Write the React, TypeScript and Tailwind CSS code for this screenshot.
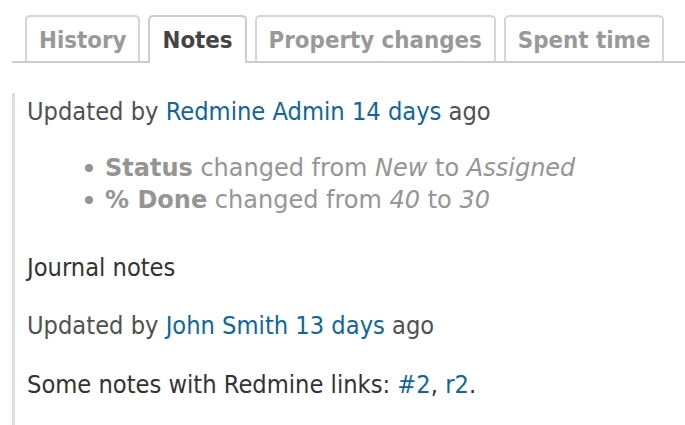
import React from "react";

const cond = { fontFamily: '"DejaVu Sans Condensed", "DejaVu Sans", Verdana, sans-serif', fontStretch: "condensed" as const };
const wide = { fontFamily: '"DejaVu Sans", Verdana, sans-serif', fontStretch: "normal" as const };

function Tab({ label, active }: { label: string; active?: boolean }) {
  return active ? (
    <div className="relative -mb-[2px] rounded-t-[5px] border-2 border-b-0 border-[#cccccc] bg-white px-[12px] pt-[10px] pb-[10px] text-[23.8px] font-bold leading-[26px] text-[#444444]">
      {label}
    </div>
  ) : (
    <div className="rounded-t-[5px] border-2 border-b-0 border-[#d5d5d5] bg-white px-[12px] pt-[10px] pb-[8px] text-[23.8px] font-bold leading-[26px] text-[#999999]">
      {label}
    </div>
  );
}

export default function App() {
  return (
    <div className="h-[425px] w-[685px] overflow-hidden bg-white" style={cond}>
      <div className="pl-[12px] pt-[15px]">
        <div className="flex items-end gap-[8px] border-b-2 border-[#cccccc] pl-[13px]">
          <Tab label="History" />
          <Tab label="Notes" active />
          <Tab label="Property changes" />
          <Tab label="Spent time" />
        </div>
      </div>
      <div className="ml-[12px] mt-[30px] border-l-[3px] border-[#dddddd] pl-[12px] pb-[40px] text-[25.2px] leading-[32px]">
        <div className="pt-[3px] text-[#505050]">
          Updated by <span className="text-[#116699]">Redmine Admin</span>{" "}
          <span className="text-[#116699]">14 days</span> ago
        </div>
        <ul className="mt-[24px] pl-[58px] text-[24px] text-[#959595]" style={wide}>
          <li className="flex items-center">
            <span className="mr-[12px] inline-block h-[8px] w-[8px] rounded-full bg-[#959595]" />
            <span>
              <b>Status</b> changed from <i>New</i> to <i>Assigned</i>
            </span>
          </li>
          <li className="flex items-center">
            <span className="mr-[12px] inline-block h-[8px] w-[8px] rounded-full bg-[#959595]" />
            <span>
              <b>% Done</b> changed from <i>40</i> to <i>30</i>
            </span>
          </li>
        </ul>
        <p className="mt-[36px] text-[#333333]">Journal notes</p>
        <div className="mt-[26px] text-[#505050]">
          Updated by <span className="text-[#116699]">John Smith</span>{" "}
          <span className="text-[#116699]">13 days</span> ago
        </div>
        <p className="mt-[27px] text-[#333333]">
          Some notes with Redmine links: <span className="text-[#116699]">#2</span>,{" "}
          <span className="text-[#116699]">r2</span>.
        </p>
      </div>
    </div>
  );
}
